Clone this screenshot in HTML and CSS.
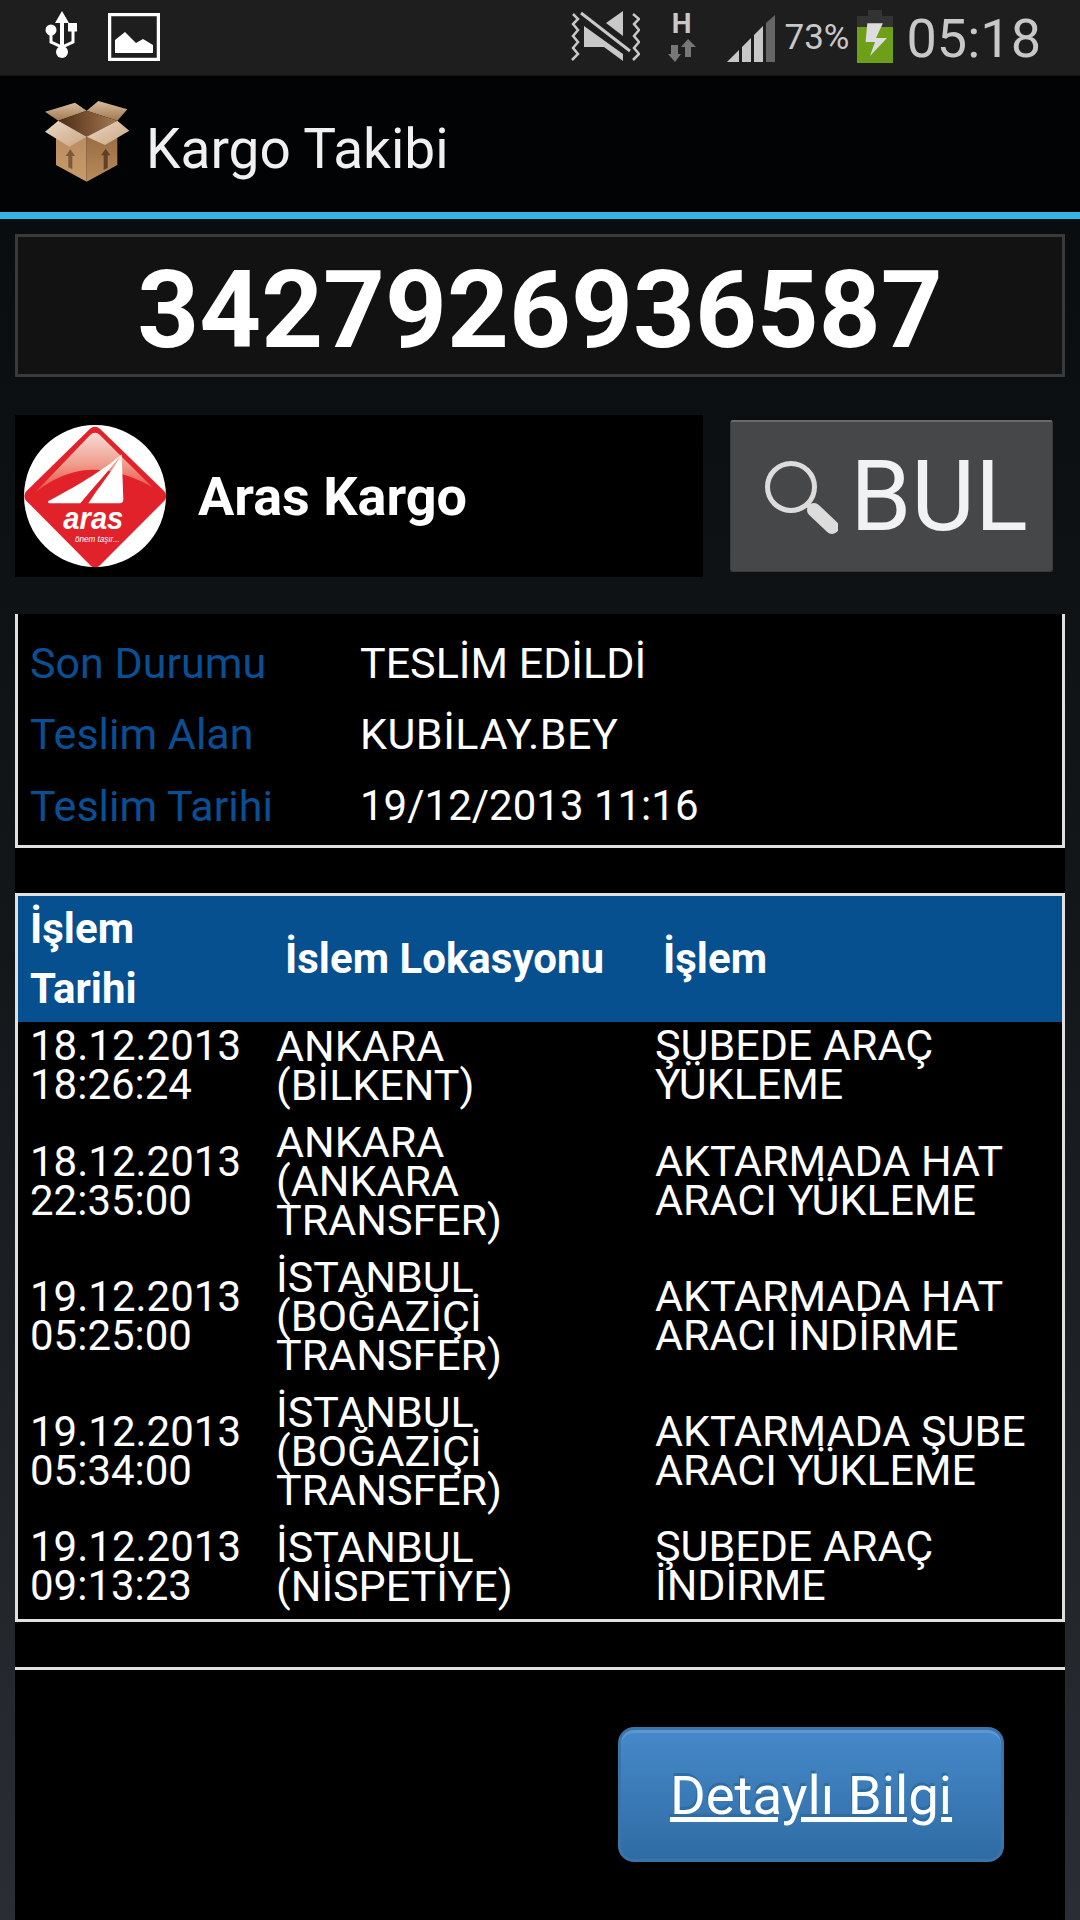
FILE: index.html
```html
<!DOCTYPE html>
<html lang="tr">
<head>
<meta charset="utf-8">
<title>Kargo Takibi</title>
<link rel="stylesheet" href="styles.css">
</head>
<body>
<header class="statusbar">
  <div class="status-left">
    <svg class="ic-usb" width="34" height="50" viewBox="0 0 34 50">
      <path d="M17 0 L24 12 L19 12 L19 40 L15 40 L15 12 L10 12 Z" fill="#fff"/>
      <circle cx="17" cy="41" r="6" fill="#fff"/>
      <circle cx="6" cy="19" r="5.5" fill="#fff"/>
      <rect x="23" y="12" width="9" height="8.500" fill="#fff"/>
      <path d="M6 20 V31 L17 36 L28 31 V20" fill="none" stroke="#fff" stroke-width="3"/>
    </svg>
    <svg class="ic-image" width="52" height="48" viewBox="0 0 52 48">
      <rect x="1.500" y="1.500" width="49" height="45" fill="none" stroke="#fff" stroke-width="3.500"/>
      <path d="M7 40 V27 L17 19 L28 30 L35 26 L45 32 V40 Z" fill="#fff"/>
    </svg>
  </div>
  <div class="status-right">
    <svg class="ic-mute" width="69" height="50" viewBox="0 0 69 50">
      <g fill="#c8c8c8">
        <polygon points="52,0 52,25 35,12"/>
        <polygon points="13,15 52,43 52,50 33,36 13,36"/>
      </g>
      <path d="M10 2 L59 40" stroke="#c8c8c8" stroke-width="3" fill="none"/>
      <g fill="none" stroke="#c8c8c8" stroke-width="2.500">
        <path d="M2 3 L7 8 L2 13 L7 19 L2 25 L7 31 L2 37 L7 43 L1 49"/>
        <path d="M62 3 L68 8 L63 13 L68 19 L63 25 L68 31 L63 37 L68 43 L62 49"/>
      </g>
    </svg>
    <div class="net">
      <span class="net-h">H</span>
      <svg width="28" height="23" viewBox="0 0 28 23">
        <path d="M3 6 H10 V15 H13 L7 23 L0 15 H3 Z" fill="#777"/>
        <path d="M17 18 H23 V8 H28 L20 0 L13 8 H17 Z" fill="#777"/>
      </svg>
    </div>
    <svg class="ic-signal" width="48" height="47" viewBox="0 0 48 47">
      <g fill="#c8c8c8">
        <polygon points="0,47 12,35 12,47"/>
        <polygon points="15,32 24,23 24,47 15,47"/>
        <polygon points="27,20 36,11 36,47 27,47"/>
      </g>
      <polygon points="39,8 48,0 48,47 39,47" fill="#666"/>
    </svg>
    <span class="pct">73%</span>
    <svg class="ic-batt" width="36" height="53" viewBox="0 0 36 53">
      <rect x="11" y="0" width="14" height="7" fill="#333"/>
      <rect x="0" y="6" width="36" height="12" fill="#333"/>
      <rect x="0" y="17" width="36" height="36" fill="#6e9f18"/>
      <polygon points="10.300,13.300 25.900,13.300 19,28 30,28 13,46 18,32 8.600,32" fill="#ddd"/>
    </svg>
    <span class="clock">05:18</span>
  </div>
</header>

<div class="appbar">
  <svg class="app-icon" width="110" height="100" viewBox="0 0 330 300">
    <defs>
      <linearGradient id="boxL" x1="0" y1="0" x2="0" y2="1"><stop offset="0" stop-color="#b88a5f"/><stop offset="1" stop-color="#c99a6a"/></linearGradient>
      <linearGradient id="boxR" x1="0" y1="0" x2="0" y2="1"><stop offset="0" stop-color="#94683f"/><stop offset="1" stop-color="#b98a5a"/></linearGradient>
      <linearGradient id="flap" x1="0" y1="0" x2="1" y2="1"><stop offset="0" stop-color="#ecd9c5"/><stop offset="1" stop-color="#c9a583"/></linearGradient>
      <linearGradient id="flapB" x1="0" y1="0" x2="0" y2="1"><stop offset="0" stop-color="#d8bca0"/><stop offset="1" stop-color="#a0794f"/></linearGradient>
      <linearGradient id="inner" x1="0" y1="0" x2="1" y2="0"><stop offset="0" stop-color="#4a2c16"/><stop offset="0.5" stop-color="#7a5231"/><stop offset="1" stop-color="#a27a55"/></linearGradient>
    </defs>
    <polygon points="45,65 135,38 170,62 85,92" fill="url(#flapB)"/>
    <polygon points="170,62 205,33 292,58 262,92" fill="url(#flapB)"/>
    <polygon points="85,92 170,62 262,92 170,140" fill="url(#inner)"/>
    <polygon points="78,120 170,140 170,275 78,225" fill="url(#boxL)"/>
    <polygon points="170,140 262,115 262,225 170,275" fill="url(#boxR)"/>
    <polygon points="85,92 170,140 118,170 45,125" fill="url(#flap)"/>
    <polygon points="262,92 298,122 225,165 170,140" fill="url(#flap)"/>
    <path d="M121 178 L135 198 L127 198 L127 238 L115 232 L115 198 L107 198 Z" fill="#7d5a3c"/>
    <path d="M227 176 L241 196 L233 196 L233 234 L221 240 L221 196 L213 196 Z" fill="#5e3f27"/>
  </svg>
  <span class="app-title">Kargo Takibi</span>
</div>

<main class="content">
  <div class="tracking">3427926936587</div>

  <div class="search-row">
    <div class="carrier">
      <svg class="carrier-logo" width="160" height="160" viewBox="0 0 480 480">
        <defs>
          <linearGradient id="gloss" x1="0" y1="0" x2="0" y2="1"><stop offset="0" stop-color="#f6dcd8"/><stop offset="0.5" stop-color="#f0a08f"/><stop offset="1" stop-color="#e9483c"/></linearGradient>
        </defs>
        <circle cx="240" cy="240" r="213" fill="#fff"/>
        <path d="M240 52 L434 240 L240 434 L48 240 Z" fill="#e2222a" stroke="#e2222a" stroke-width="40" stroke-linejoin="round"/>
        <path d="M240 50 Q248 50 254 56 L412 214 C340 170 250 150 180 168 C130 180 90 205 58 232 L226 56 Q232 50 240 50 Z" fill="url(#gloss)"/>
        <path d="M320 115 C270 160 170 220 100 255 Q96 262 108 262 H196 C235 215 285 160 320 115 Z" fill="#fff"/>
        <path d="M320 115 C300 155 250 215 220 262 H314 Q325 262 325 250 Z" fill="#fff"/>
        <text class="logo-name" x="145" y="340" textLength="180" lengthAdjust="spacingAndGlyphs">aras</text>
        <text class="logo-tag" x="180" y="378" textLength="134" lengthAdjust="spacingAndGlyphs">önem taşır...</text>
      </svg>
      <span class="carrier-name">Aras Kargo</span>
    </div>
    <button class="find" type="button">
      <svg width="74" height="74" viewBox="0 0 74 74">
        <circle cx="27" cy="27" r="23.500" fill="none" stroke="#dcdcdc" stroke-width="5"/>
        <path d="M43 44 L49 50" stroke="#dcdcdc" stroke-width="5"/>
        <path d="M50 50 L68 67" stroke="#dcdcdc" stroke-width="14" stroke-linecap="round"/>
      </svg>
      <span>BUL</span>
    </button>
  </div>

  <section class="panel">
    <dl class="summary">
      <dt>Son Durumu</dt><dd>TESLİM EDİLDİ</dd>
      <dt>Teslim Alan</dt><dd class="wide">KUBİLAY.BEY</dd>
      <dt>Teslim Tarihi</dt><dd class="date">19/12/2013 11:16</dd>
    </dl>

    <table class="moves">
      <colgroup><col class="c1"><col class="c2"><col class="c3"></colgroup>
      <thead>
        <tr><th>İşlem<br>Tarihi</th><th>İslem Lokasyonu</th><th>İşlem</th></tr>
      </thead>
      <tbody>
        <tr><td>18.12.2013<br>18:26:24</td><td>ANKARA<br>(BİLKENT)</td><td>ŞUBEDE ARAÇ<br>YÜKLEME</td></tr>
        <tr><td>18.12.2013<br>22:35:00</td><td>ANKARA<br>(ANKARA<br>TRANSFER)</td><td>AKTARMADA HAT<br>ARACI YÜKLEME</td></tr>
        <tr><td>19.12.2013<br>05:25:00</td><td>İSTANBUL<br>(BOĞAZİÇİ<br>TRANSFER)</td><td>AKTARMADA HAT<br>ARACI İNDİRME</td></tr>
        <tr><td>19.12.2013<br>05:34:00</td><td>İSTANBUL<br>(BOĞAZİÇİ<br>TRANSFER)</td><td>AKTARMADA ŞUBE<br>ARACI YÜKLEME</td></tr>
        <tr><td>19.12.2013<br>09:13:23</td><td>İSTANBUL<br>(NİSPETİYE)</td><td>ŞUBEDE ARAÇ<br>İNDİRME</td></tr>
      </tbody>
    </table>

    <hr class="rule">

    <div class="actions"><a class="detail" href="#">Detaylı Bilgi</a></div>
  </section>
</main>
</body>
</html>
```

FILE: styles.css
```css
* { box-sizing: border-box; }
html, body { margin: 0; padding: 0; }
body {
  width: 1080px;
  height: 1920px;
  overflow: hidden;
  font-family: Roboto, "Noto Sans", sans-serif;
  color: #fff;
  background: linear-gradient(180deg, #070a0c 0%, #14171a 50%, #2a2d33 100%);
  display: flex;
  flex-direction: column;
}

/* status bar */
.statusbar {
  height: 76px;
  flex: none;
  background: #1e1e1e;
  border-bottom: 1px solid #141414;
  display: flex;
  justify-content: space-between;
}
.status-left { display: flex; align-items: flex-start; padding-left: 45px; }
.ic-usb { margin-top: 11px; }
.ic-image { margin-top: 13px; margin-left: 29px; }
.status-right { display: flex; align-items: flex-start; padding-right: 39px; }
.ic-mute { margin-top: 11px; }
.net { display: flex; flex-direction: column; align-items: center; width: 28px; margin-left: 28px; margin-top: 9px; }
.net-h { font-size: 28px; font-weight: 700; line-height: 30px; color: #c8c8c8; }
.ic-signal { margin-top: 15px; margin-left: 31px; }
.pct { font-size: 35px; line-height: 42px; margin-top: 17px; margin-left: 10px; color: #c8c8c8; width: 65px; }
.ic-batt { margin-top: 10px; margin-left: 7px; }
.clock { font-size: 54px; line-height: 64px; margin-top: 7px; margin-left: 14px; color: #c8c8c8; }

/* action bar */
.appbar {
  height: 143px;
  flex: none;
  background: #010304;
  border-bottom: 7px solid #33b5e5;
  display: flex;
  align-items: center;
  padding-left: 30px;
}
.app-icon { margin-top: -8px; }
.app-title { font-size: 55px; color: #f0f0f0; margin-left: 6px; padding-top: 10px; }

/* content */
.content { flex: 1; min-height: 0; display: flex; flex-direction: column; padding: 15px 15px 0; }
.tracking {
  height: 143px;
  flex: none;
  background: #121212;
  border: 3px solid #3a3a3a;
  text-align: center;
  font-size: 108px;
  font-weight: 700;
  line-height: 146px;
}
.search-row { height: 162px; flex: none; margin-top: 38px; display: flex; align-items: center; }
.carrier { width: 688px; height: 162px; background: #000; display: flex; align-items: center; }
.carrier-logo { flex: none; }
.carrier-name { font-size: 54px; font-weight: 700; margin-left: 23px; }
.logo-name { font-family: "Liberation Sans", sans-serif; font-size: 92px; font-weight: 700; font-style: italic; fill: #fff; }
.logo-tag { font-family: "Liberation Sans", sans-serif; font-size: 26px; font-style: italic; fill: #fff; }
.find {
  width: 323px;
  height: 152px;
  margin-left: 27px;
  padding: 0 0 0 9px;
  background: #464748;
  border: 1px solid #3a3a3a;
  border-top: 2px solid #6a6a6a;
  border-radius: 3px;
  color: #f2f2f2;
  font: 400 98px Roboto, sans-serif;
  display: flex;
  align-items: center;
  justify-content: center;
  gap: 12px;
}

.panel { flex: 1; min-height: 0; margin-top: 37px; background: #000; display: flex; flex-direction: column; }
.summary {
  margin: 0;
  height: 234px;
  flex: none;
  border: 3px solid #e0e0e0;
  border-top: 0;
  padding: 13px 13px 0 12px;
  display: grid;
  grid-template-columns: 330px 1fr;
  grid-auto-rows: 71.500px;
  align-items: center;
  font-size: 43px;
}
.summary dt { color: #0a4f94; }
.summary dd { margin: 0; color: #fff; }
.summary .wide { letter-spacing: 0.5px; }
.summary .date { font-size: 42px; }

.moves {
  width: 100%;
  margin-top: 45px;
  flex: none;
  border-collapse: separate;
  border-spacing: 0;
  border: 3px solid #e0e0e0;
  table-layout: fixed;
  font-size: 43px;
}
.c1 { width: 246px; }
.c2 { width: 378px; }
.moves th {
  background: #07508f;
  font-size: 42px;
  font-weight: 700;
  line-height: 60px;
  height: 126px;
  padding: 3px 0 3px 21px;
  text-align: left;
  vertical-align: middle;
}
.moves th:first-child { padding-left: 12px; }
.moves td { padding: 5px 0 13px 12px; line-height: 39px; vertical-align: middle; white-space: nowrap; }
.moves td:first-child { font-size: 42px; padding: 4px 0 14px 12px; }
.moves td:last-child { padding: 4px 0 14px 13px; }

.rule { margin: 45px 0 0; height: 3px; flex: none; border: 0; background: #e0e0e0; }

.actions { display: flex; justify-content: flex-end; padding-right: 61px; margin-top: 57px; }
.detail {
  width: 386px;
  height: 135px;
  border-radius: 16px;
  border: 3px solid #3a74aa;
  background: linear-gradient(180deg, #4689ca 0%, #2f6ca4 100%);
  box-shadow: inset 0 3px 0 #5c97cf;
  color: #fff;
  font-size: 54.500px;
  display: flex;
  align-items: center;
  justify-content: center;
  text-shadow: -1px -3px 0 #2e6da4;
}
```
